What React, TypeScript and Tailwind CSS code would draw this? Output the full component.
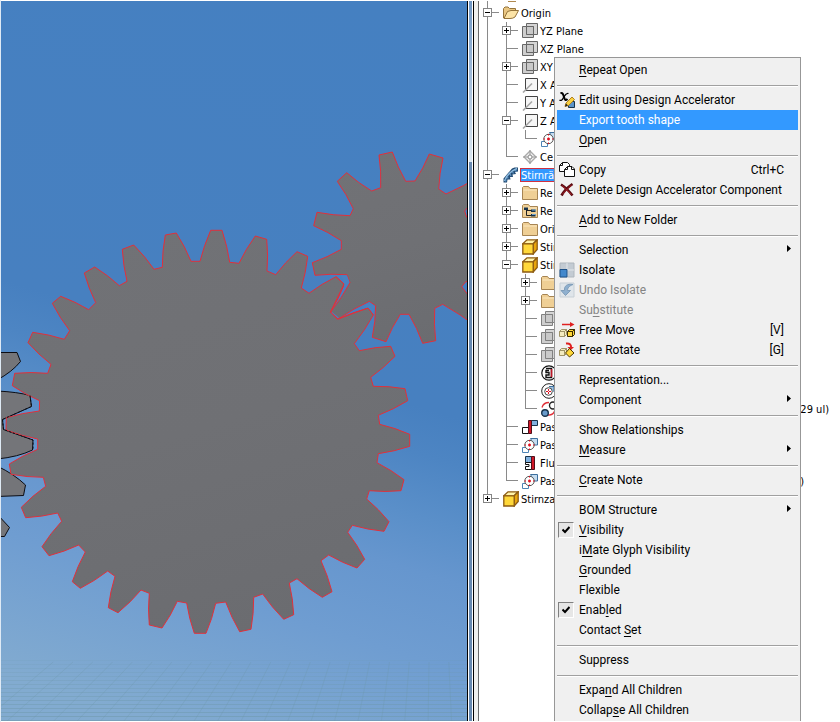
import React from "react";

type Pt = [number, number];

/* ---------- gear outlines: alternating root and tip edges, clockwise ---------- */

const BIG_GEAR: Pt[] = [
  [39.3, 411], [39.6, 400.7], [12.3, 385.7], [14.7, 373.3], [47.7, 373.3], [51, 364.3], [28, 342.7], [32.7, 332.3],
  [64.3, 339.3], [69.7, 330.7], [52.3, 303.3], [60.7, 296.3], [88.7, 309.7], [95.7, 302.7], [84.3, 273], [94.7, 267],
  [119.3, 285.7], [127, 281.3], [122.3, 249.3], [133.7, 245], [154, 269.3], [162.3, 267.3], [165.3, 235], [176.3, 233],
  [191, 261.3], [200, 261.3], [210.7, 230.3], [222, 230.3], [229.7, 262.3], [239, 263.3], [255.3, 236], [266.7, 239.3],
  [267, 271], [275.7, 274.7], [297, 251.7], [307.7, 256.3], [301.3, 288], [309, 293.3], [336, 276.7], [344.3, 284.3],
  [330.3, 312.3], [337.7, 319.3], [368.3, 308], [373.3, 315], [354.3, 343.7], [359.3, 350.7], [390.7, 346.3], [395, 356.3],
  [370.7, 377.3], [373.3, 386.3], [405, 388.7], [407.7, 400.7], [378.3, 415.3], [379.7, 424.3], [409.7, 434.3], [409.7, 446.3],
  [378.3, 453.7], [377, 462.7], [404, 479.7], [401, 490.7], [369.3, 490.7], [366.7, 499], [389, 521.7], [384, 531.3],
  [352.3, 525.3], [347.7, 532.3], [364.7, 559.3], [357, 568], [328.7, 555], [321, 560.7], [332, 591.7], [322.3, 597.3],
  [297, 578.7], [289.3, 583], [293.7, 614.7], [283.7, 619.3], [262.7, 594], [253.7, 597.3], [251, 629.3], [239.7, 631.7],
  [225.7, 602], [215.7, 603.3], [206, 633.3], [194.3, 633.3], [186.7, 603], [177.3, 601.3], [162, 628], [149.3, 625],
  [149.3, 593.3], [141, 590], [118, 612.7], [108.3, 607.7], [115, 576.3], [107.7, 571], [80.3, 588.3], [72.3, 581.7],
  [85.3, 552], [78.7, 545], [49, 555.7], [42, 546.7], [61.7, 521.3], [57.7, 513], [25.7, 517.7], [21.3, 507.3],
  [45.7, 486.3], [43.3, 477.3], [11, 474.3], [9.3, 464], [37.7, 449.3], [37.7, 439], [6, 430], [6.3, 417.7],
];

const PINION: Pt[] = [
  [347, 274.7], [350, 282.7], [330.7, 312], [339.3, 318.3], [369.3, 301.3], [375.7, 305.7], [372.3, 337.3], [386, 341.7],
  [400.3, 314.3], [409, 314.3], [422.7, 343.3], [435.7, 340.7], [434.7, 308.3], [442.7, 304.3], [477, 327], [487, 317],
  [461.7, 286.7], [465.7, 281.7], [498, 282], [500, 270], [473, 255], [473, 246], [503, 237], [502, 225],
  [466.7, 217.3], [464.7, 211], [488, 185], [480, 176], [446, 194], [438.7, 189], [443, 158], [429.3, 154],
  [415, 181], [405.7, 181.3], [392.3, 152], [379, 155], [380.7, 187.7], [371.7, 191], [346.7, 172.7], [337.3, 181.3],
  [353.3, 208.7], [350, 215.7], [317, 212.3], [313.7, 225.7], [341.3, 240.7], [341.3, 249.3], [312.3, 262.7], [315, 275.3],
];

/* Joins the points; every flank between root and tip bulges out a little,
   always to the left of the clockwise direction of travel. */
function gearPath(points: Pt[], bulge: number): string {
  let d = `M${points[0][0]} ${points[0][1]}`;
  for (let i = 1; i <= points.length; i++) {
    const a = points[i - 1];
    const b = points[i % points.length];
    if (i % 2 === 1) {
      d += `L${b[0]} ${b[1]}`;
      continue;
    }
    const dx = b[0] - a[0];
    const dy = b[1] - a[1];
    const len = Math.hypot(dx, dy) || 1;
    const mx = (a[0] + b[0]) / 2 + (bulge * dy) / len;
    const my = (a[1] + b[1]) / 2 - (bulge * dx) / len;
    d += `Q${mx} ${my} ${b[0]} ${b[1]}`;
  }
  return d + "Z";
}

function Viewport() {
  const rows = Array.from({ length: 16 }, (_, i) => 660 + i * 4);
  const cols = Array.from({ length: 22 }, (_, i) => i);
  return (
    <svg className="block h-full w-full" viewBox="0 0 466 720" preserveAspectRatio="xMinYMin slice" role="img" aria-label="Gear assembly">
      <defs>
        <linearGradient id="sky" gradientUnits="userSpaceOnUse" x1="380" y1="0" x2="160" y2="722">
          <stop offset="0" stopColor="#4580c1" />
          <stop offset="0.5" stopColor="#4780c0" />
          <stop offset="0.56" stopColor="#4d85c3" />
          <stop offset="0.64" stopColor="#5a8fc9" />
          <stop offset="0.71" stopColor="#6696ce" />
          <stop offset="0.82" stopColor="#6f9dd1" />
          <stop offset="1" stopColor="#82abd0" />
        </linearGradient>
        <linearGradient id="steel" x1="0.3" y1="0" x2="0.6" y2="1">
          <stop offset="0" stopColor="#717276" />
          <stop offset="0.5" stopColor="#6f7074" />
          <stop offset="1" stopColor="#6b6c70" />
        </linearGradient>
      </defs>
      <g transform="translate(-1 -1)">
        <rect x="0" y="0" width="1600" height="1600" fill="url(#sky)" />
        <g stroke="#6c97a6" strokeWidth="1">
          {rows.map((y, i) => (
            <line key={y} x1="0" x2="468" y1={y + 0.5} y2={y + 0.5} opacity={0.1 + i * 0.025} />
          ))}
          {cols.map((c) => (
            <line key={c} x1={c * 23 - 10 + (c * 23 - 380) * 0.02} y1="722" x2={380 + (c * 23 - 380) * 0.86} y2="662" opacity="0.25" />
          ))}
        </g>
        <g fill="#747579" stroke="#0c0c12" strokeWidth="1">
          <path d="M-3 352.5H17L20.5 361.5Q12 372 -3 380Z" />
          <path d="M-3 391Q18 392 30 395.5L31.5 406.5L2.5 419.5L3.5 429.5L33 440L32.500 450Q18 457 -3 459Z" />
          <path d="M-3 466Q14 474 25.500 485L23.500 495.500L-3 496.500Z" />
          <path d="M-3 514L9.500 527.500L4.500 536.500H-3Z" />
        </g>
        <g fill="url(#steel)" stroke="#e0303c" strokeWidth="1">
          <path d={gearPath(BIG_GEAR, 1.5)} />
          <path d={gearPath(PINION, 1.5)} />
        </g>
        {/* slivers of sky left open where the teeth mesh */}
        <g fill="#4a82c1">
          <path d="M341 275L347 275.500L349.500 282L344.500 287L343.500 281Z" />
          <path d="M361 307.500L369.500 302.500L374.500 306L373 313L368 308Z" />
          <path d="M332 312L339 317.500L337.500 318.500L331 313Z" />
        </g>
        <path d="M2.500 419.500L3.500 429.500L33 440V450M30 395.500L31.500 406.500L2.500 419.500" fill="none" stroke="#0c0c12" strokeDasharray="2 2" />
        <path d="M336 276.700L344 284L330.500 312L338 319L368 308L373.300 315" fill="none" stroke="#e0303c" />
      </g>
    </svg>
  );
}

/* ---------- browser tree ---------- */

type Kind =
  | "openFolder" | "folder" | "repFolder" | "plane" | "planeDim" | "axis" | "mate" | "mateRing" | "point"
  | "gear" | "part" | "iMate" | "link" | "flush" | "align";

function MateShape() {
  return (
    <>
      <path d="M8.500 1.500H15.500V8H12Z" fill="#c4dcf0" stroke="#3c6f9d" />
      <path d="M4 10.500H.5V15.500H6.500V13" fill="#fff" stroke="#4d84b5" />
      <circle cx="7.500" cy="8" r="4.700" fill="#fff" stroke="#555" />
      <path d="M6 8H9M7.500 6.500V9.500" stroke="#e01020" strokeWidth="1.400" />
      <path d="M7.500 3V4.500M7.500 11.500V13M2.500 8H4M11 8H12.500" stroke="#e01020" />
    </>
  );
}

function TreeIcon({ kind }: { kind: Kind }) {
  let art: React.ReactNode = null;
  switch (kind) {
    case "openFolder":
      art = (
        <>
          <path d="M.5 13V3.500L2 2H5L6.500 3.500H12.500V6" fill="#e9c682" stroke="#94733a" />
          <path d="M1 13.500L4.500 6.500L8 5.500H15.500L12 12Q10 13.500 7 13.500Z" fill="#fbe3a6" stroke="#94733a" />
        </>
      );
      break;
    case "folder":
    case "repFolder":
      art = (
        <>
          <path d="M.5 14.500V2.500L1.500 1.500H6.500L8 3.500H15.500V14.500Z" fill="#efcf95" stroke="#a68453" />
          <path d="M1.500 5H15" stroke="#fbe7bf" />
          {kind === "repFolder" && (
            <>
              <path d="M4.500 6V12.500H9M4.500 7.500H9" fill="none" stroke="#222" />
              <path d="M2 4.500H6V7H2ZM9 6.500H13.500V9H9ZM9 11H13.500V13.500H9Z" fill="#17324a" />
              <path d="M10 7H14M10 11.500H14" stroke="#6fa3d0" />
            </>
          )}
        </>
      );
      break;
    case "plane":
    case "planeDim": {
      const s = kind === "plane" ? "#666" : "#808080";
      art = (
        <>
          <path d="M4.500 .5H15.500V11.500H4.500Z" fill="#d5d5d5" stroke={s} />
          <path d="M.5 3.500H11.500V14.500H.5Z" fill="#bdbdbd" fillOpacity=".75" stroke={s} />
          <path d="M4.500 3.500H11.500V11.500H4.500Z" fill="#c9c9c9" stroke={s} />
        </>
      );
      break;
    }
    case "axis":
      art = (
        <>
          <path d="M3.500 1.500H15.500V13.500H3.500Z" fill="#f6f6f6" stroke="#444" />
          <path d="M1 15.500L10 6.500" stroke="#a5a5a5" strokeWidth="1.600" />
        </>
      );
      break;
    case "mate":
      art = <MateShape />;
      break;
    case "mateRing":
      art = (
        <>
          <circle cx="8" cy="8" r="7.300" fill="#fff" stroke="#222" />
          <path d="M8 3.500H13V9" fill="#9fc3e4" stroke="#3c6f9d" />
          <circle cx="7.500" cy="8.500" r="3.800" fill="#fff" stroke="#444" />
          <path d="M7.500 6V11M5 8.500H10" stroke="#e01020" strokeDasharray="2 1" />
        </>
      );
      break;
    case "point":
      art = (
        <>
          <path d="M8 2L14 8L8 14L2 8Z" fill="#eee" stroke="#aaa" strokeWidth="1.300" />
          <path d="M8 1V6M8 10V15M1 8H6M10 8H15" stroke="#999" />
          <circle cx="8" cy="8" r="2" fill="#fff" stroke="#888" />
        </>
      );
      break;
    case "gear":
      art = (
        <>
          <path d="M.5 15.500V11.500L9 1.500L11.500 .5H15V4.500L12 5L13 7L9.500 7.500L10 10L7 10L7.500 12.500L4.500 12.500L4 15.500Z" fill="#234c74" />
          <path d="M1.500 14C3.500 8.500 7.500 4 14 1.500" fill="none" stroke="#8fbce0" strokeWidth="1.400" />
          <path d="M2.500 14.500L3 12.500M5 11.500L4.500 9.500M8 9L7 7M10.500 6.500L9.500 5M13.500 4.500L12 3" stroke="#5f95c6" strokeWidth="1.200" />
        </>
      );
      break;
    case "part":
      art = (
        <>
          <path d="M.8 4.800L5 .8H15.200L11.200 4.800Z" fill="#fff3a8" stroke="#8d5b12" strokeWidth="1.300" />
          <path d="M11.200 4.800L15.200 .8V10.500L11.200 15Z" fill="#e8a50c" stroke="#8d5b12" strokeWidth="1.300" />
          <path d="M.8 4.800H11.200V15H.8Z" fill="#ffd83a" stroke="#8d5b12" strokeWidth="1.300" />
        </>
      );
      break;
    case "iMate":
      art = (
        <>
          <circle cx="8" cy="8" r="7.200" fill="#fff" stroke="#111" strokeWidth="1.200" />
          <path d="M5 3.500H10.500V12.500H5V10H8V7.500H5V5.500H8" fill="none" stroke="#111" strokeWidth="1.400" />
          <path d="M10.500 4V12" stroke="#c01828" strokeWidth="1.600" />
        </>
      );
      break;
    case "link":
      art = (
        <>
          <path d="M1 6.500C2 3 5 1.500 8 1.500M6 14C10 14.500 13 12.500 14 9" fill="none" stroke="#e03038" strokeWidth="1.300" />
          <circle cx="4" cy="12" r="3.300" fill="#6a9ccc" stroke="#17324a" strokeWidth="1.400" />
          <circle cx="12" cy="4.500" r="3.500" fill="#fff" stroke="#222" strokeWidth="1.400" />
        </>
      );
      break;
    case "flush":
      art = (
        <>
          <path d="M9.500 1.500H15.500V6.500H9.500Z" fill="#7fb0de" stroke="#17324a" />
          <path d="M.5 8.500H6.500V14.500H.5Z" fill="#fff" stroke="#111" />
          <path d="M6.500 1.500H9.500V14.500H6.500Z" fill="#d01828" stroke="#50101a" />
        </>
      );
      break;
    case "align":
      art = (
        <>
          <path d="M3.500 1.500H9.500V7.500H3.500Z" fill="#7fb0de" stroke="#17324a" />
          <path d="M3.500 7.500H9.500V14.500H3.500V11.500H7V9.500H3.500Z" fill="#fff" stroke="#111" />
          <path d="M9.500 1.500H12.500V14.500H9.500Z" fill="#d01828" stroke="#50101a" />
        </>
      );
      break;
  }
  return (
    <svg className="ml-[5px] size-4 shrink-0" viewBox="0 0 16 16" aria-hidden="true">
      {art}
    </svg>
  );
}

/* One 19px indent cell: v = line through, t = tee, l = last,
   p / m = plus or minus tee, e = plus on the last branch. */
function Branch({ type }: { type: string }) {
  const through = type === "v" || type === "t" || type === "p" || type === "m";
  return (
    <svg className="h-[18px] w-[19px] shrink-0 overflow-visible" viewBox="0 0 19 18" shapeRendering="crispEdges" aria-hidden="true">
      <path d={through ? "M8.500 0V18" : "M8.500 0V9"} stroke="#8a8a8a" />
      {type !== "v" && <path d="M8.500 8.500H20" stroke="#8a8a8a" />}
      {(type === "p" || type === "m" || type === "e") && (
        <>
          <rect x="4.500" y="4.500" width="8" height="8" fill="#fff" stroke="#858585" />
          <path d={type === "m" ? "M6 8.500H11" : "M6 8.500H11M8.500 6V11"} stroke="#000" />
        </>
      )}
    </svg>
  );
}

interface Node {
  cells: string;
  icon: Kind;
  text: string;
  tail?: string;
  tailClass?: string;
  selected?: boolean;
}

const NODES: Node[] = [
  { cells: "m", icon: "openFolder", text: "Origin" },
  { cells: "vp", icon: "plane", text: "YZ Plane" },
  { cells: "vt", icon: "plane", text: "XZ Plane" },
  { cells: "vp", icon: "plane", text: "XY" },
  { cells: "vt", icon: "axis", text: "X A" },
  { cells: "vt", icon: "axis", text: "Y A" },
  { cells: "vm", icon: "axis", text: "Z A" },
  { cells: "vvl", icon: "mate", text: "" },
  { cells: "vl", icon: "point", text: "Ce" },
  { cells: "m", icon: "gear", text: "Stirnrä", selected: true },
  { cells: "vp", icon: "folder", text: "Re" },
  { cells: "vp", icon: "repFolder", text: "Re" },
  { cells: "vp", icon: "folder", text: "Ori" },
  { cells: "vp", icon: "part", text: "Stir" },
  { cells: "vm", icon: "part", text: "Stir" },
  { cells: "vvp", icon: "folder", text: "" },
  { cells: "vvp", icon: "folder", text: "" },
  { cells: "vvt", icon: "planeDim", text: "" },
  { cells: "vvt", icon: "planeDim", text: "" },
  { cells: "vvt", icon: "planeDim", text: "" },
  { cells: "vvt", icon: "iMate", text: "" },
  { cells: "vvt", icon: "mateRing", text: "" },
  { cells: "vvl", icon: "link", text: "", tail: "429 ul)", tailClass: "pr-[11px]" },
  { cells: "vt", icon: "flush", text: "Pas" },
  { cells: "vt", icon: "mate", text: "Pas" },
  { cells: "vt", icon: "align", text: "Flu" },
  { cells: "vl", icon: "mate", text: "Pas", tail: ")", tailClass: "pr-9" },
  { cells: "e", icon: "part", text: "Stirnza" },
];

function Tree() {
  return (
    <div className="font-['DejaVu_Sans_Condensed','Noto_Sans',sans-serif] text-[11px] leading-[18px] text-black">
      <svg className="block h-[3px] w-10" viewBox="0 0 40 3" shapeRendering="crispEdges" aria-hidden="true">
        <path d="M8.500 0V3" stroke="#8a8a8a" />
        <path d="M29 .5H37" stroke="#b08a50" />
      </svg>
      <ul>
        {NODES.map((n, i) => (
          <li key={i} className="flex h-[18px] items-center">
            {n.cells.split("").map((c, j) => (
              <Branch key={j} type={c} />
            ))}
            <TreeIcon kind={n.icon} />
            {n.selected ? (
              <span className="ml-px h-[14px] w-16 border border-[#d03040] bg-[#3399ff] leading-[13px] text-white">{n.text}</span>
            ) : (
              <span className="ml-[2px] pt-px whitespace-nowrap">{n.text}</span>
            )}
            {n.tail && <span className={`ml-auto pt-px ${n.tailClass}`}>{n.tail}</span>}
          </li>
        ))}
      </ul>
    </div>
  );
}

/* ---------- context menu ---------- */

function Cube({ x, y, fill }: { x: number; y: number; fill: string }) {
  return (
    <g transform={`translate(${x} ${y})`} stroke={fill === "#ffd83a" ? "#3c2c00" : "#a09468"} fill={fill}>
      <path d="M.5 2.500L2.500 .5H7.500L5.500 2.500ZM5.500 2.500L7.500 .5V5.500L5.500 7.500ZM.5 2.500H5.500V7.500H.5Z" />
    </g>
  );
}

const MENU_ART: Record<string, React.ReactNode> = {
  edit: (
    <>
      <path d="M9.500 9.500H15.500V15.500H9.500Z" fill="#5b93c9" stroke="#17324a" />
      <path d="M6 14.500L7 11L13 5L15.500 7.500L9.500 13.500Z" fill="#f8d040" stroke="#b08020" />
      <path d="M6 14.500L7 11.500L9 13.500Z" fill="#222" />
      <path d="M1.500 1.500C3.500 0 4.200 2.500 5 5C5.800 8 6.500 9 8.500 7" fill="none" stroke="#000" strokeWidth="2" />
      <path d="M9.500 1.500C7 .5 5.500 4 4.500 5.500C3.200 8.500 2 9 .5 8" fill="none" stroke="#000" strokeWidth="1.300" />
    </>
  ),
  copy: (
    <>
      <path d="M3.500 .5H8.500L10.500 2.500V9.500H.5V3.500Z" fill="#fff" stroke="#111" />
      <path d="M3.500 .5V3.500H.5" fill="none" stroke="#111" />
      <path d="M8.500 4.500H13L15.500 7V14.500H5.500V7.500Z" fill="#fff" stroke="#111" />
      <path d="M8.500 4.500V7.500H5.500M12.500 4.500V7.500H15.500" fill="none" stroke="#111" />
    </>
  ),
  remove: (
    <>
      <path d="M2 2.500C6 5 10 9 13.500 13.500M13.500 2C9 5 5 9 2.500 13.500" fill="none" stroke="#5c0c12" strokeWidth="2.600" />
      <path d="M3 3.500L12.500 12.500M12.500 3L3.500 12" stroke="#a82028" strokeWidth="1" />
    </>
  ),
  isolate: (
    <>
      <path d="M1 1H15V15H1Z" fill="#c3cbd3" stroke="#aeb6bd" />
      <path d="M8 1V15M1 8H15" stroke="#e2e6ea" />
      <path d="M1 7.500H8V15H1Z" fill="#4288cc" stroke="#1e5288" />
    </>
  ),
  undo: (
    <>
      <path d="M1 1H15V15H1Z" fill="#dfe5ea" stroke="#c6cfd6" />
      <path d="M14 2.500C8 1.500 5 4 5.500 8.500H2L6.500 13.500L11.500 8.500H8.500C8.500 6 10 4 14 2.500Z" fill="#8fb0cf" stroke="#7f9db9" />
    </>
  ),
  move: (
    <>
      <path d="M3 2.500H12" stroke="#e02020" strokeWidth="1.500" />
      <path d="M11 0L15.500 2.500L11 5Z" fill="#e02020" />
      <Cube x={0} y={7} fill="#f3ebc0" />
      <Cube x={8} y={7} fill="#ffd83a" />
    </>
  ),
  rotate: (
    <>
      <path d="M7 1.500C11 1 12.500 3 12 6" fill="none" stroke="#e02020" strokeWidth="2" />
      <path d="M8.500 5H15L11.500 8.500Z" fill="#e02020" />
      <Cube x={0} y={6} fill="#f3ebc0" />
      <path d="M10.500 6.500L15 11L10.500 15L6.500 11Z" fill="#ffd83a" stroke="#4a3600" />
    </>
  ),
};

interface Entry {
  label: string;
  icon?: string;
  hint?: string;
  sub?: boolean;
  disabled?: boolean;
  active?: boolean;
  checked?: boolean;
}

/* Groups are parted by a rule; an underscore marks the access key. */
const GROUPS: Entry[][] = [
  [{ label: "_Repeat Open" }],
  [{ label: "Edit using Design Accelerator", icon: "edit" }, { label: "Export tooth shape", active: true }, { label: "_Open" }],
  [{ label: "Copy", icon: "copy", hint: "Ctrl+C" }, { label: "Delete Design Accelerator Component", icon: "remove" }],
  [{ label: "_Add to New Folder" }],
  [
    { label: "Selection", sub: true },
    { label: "Isolate", icon: "isolate" },
    { label: "Undo Isolate", icon: "undo", disabled: true },
    { label: "Su_bstitute", disabled: true },
    { label: "Free Move", icon: "move", hint: "[V]" },
    { label: "Free Rotate", icon: "rotate", hint: "[G]" },
  ],
  [{ label: "Representation..." }, { label: "Component", sub: true }],
  [{ label: "Show Relationships" }, { label: "_Measure", sub: true }],
  [{ label: "_Create Note" }],
  [
    { label: "BOM Structure", sub: true },
    { label: "_Visibility", checked: true },
    { label: "i_Mate Glyph Visibility" },
    { label: "_Grounded" },
    { label: "Flexible" },
    { label: "Enab_led", checked: true },
    { label: "Contact _Set" },
  ],
  [{ label: "Suppress" }],
  [{ label: "Expa_nd All Children" }, { label: "Collap_se All Children" }],
];

function Label({ text }: { text: string }) {
  const at = text.indexOf("_");
  if (at < 0) return <span>{text}</span>;
  return (
    <span>
      {text.slice(0, at)}
      <span className="underline underline-offset-2">{text[at + 1]}</span>
      {text.slice(at + 2)}
    </span>
  );
}

function MenuRow({ e }: { e: Entry }) {
  if (e.checked) {
    return (
      <label className="flex h-5 items-center">
        <span className="relative ml-px flex size-4 shrink-0">
          <input
            type="checkbox"
            defaultChecked
            className="size-4 appearance-none border border-t-[#808080] border-r-white border-b-white border-l-[#808080] bg-[#e6e6e6]"
          />
          <svg className="pointer-events-none absolute top-1 left-1 size-2" viewBox="0 0 8 8" aria-hidden="true">
            <path d="M.5 3.500L3 6L7.500 1" fill="none" stroke="#000" strokeWidth="2" />
          </svg>
        </span>
        <span className="ml-[5px]">
          <Label text={e.label} />
        </span>
      </label>
    );
  }
  const tone = e.active ? "bg-[#3399ff] text-white" : e.disabled ? "text-[#838383]" : "";
  return (
    <button type="button" disabled={e.disabled} className={`flex h-5 w-full items-center text-left whitespace-nowrap ${tone}`}>
      <span className="mr-1 ml-[2px] flex size-4 shrink-0">
        {e.icon && (
          <svg className="size-4" viewBox="0 0 16 16" aria-hidden="true">
            {MENU_ART[e.icon]}
          </svg>
        )}
      </span>
      <Label text={e.label} />
      {e.hint && <span className="mr-[14px] ml-auto">{e.hint}</span>}
      {e.sub && (
        <svg className="mr-[7px] mb-[3px] ml-auto h-[7px] w-1" viewBox="0 0 4 7" aria-hidden="true">
          <path d="M0 0L4 3.500L0 7Z" fill="#000" />
        </svg>
      )}
    </button>
  );
}

function ContextMenu() {
  return (
    <div className="absolute top-[57px] bottom-px left-[75px] w-[247px] overflow-hidden border border-b-0 border-[#979797] bg-[#f0f0f0] p-[2px] font-['Roboto','Noto_Sans',sans-serif] text-[12px] leading-5 text-black">
      {GROUPS.map((group, i) => (
        <React.Fragment key={i}>
          {i > 0 && (
            <div className="pt-[5px] pb-[3px]">
              <hr className="h-[2px] border-t border-b border-t-[#a0a0a0] border-b-white" />
            </div>
          )}
          {group.map((e) => (
            <MenuRow key={e.label} e={e} />
          ))}
        </React.Fragment>
      ))}
    </div>
  );
}

export default function App() {
  return (
    <div className="flex h-screen overflow-hidden bg-white">
      <main className="flex min-w-0 flex-1 border-l border-[#dfeaf5] pt-px pb-px">
        <div className="min-w-0 flex-1 overflow-hidden">
          <Viewport />
        </div>
        <div className="w-px bg-black" />
        <div className="flex w-[5px] flex-col border-l border-white bg-white pr-px">
          <div className="h-[161px] bg-linear-to-b from-[#6f97c4] to-[#dbe6ef]" />
          <div className="flex-1 bg-[#6789b0]" />
        </div>
        <div className="w-px bg-black" />
        <div className="w-1 bg-[#f0f0ee]" />
        <div className="w-px bg-[#6a6a6a]" />
      </main>
      <aside className="relative w-[361px] shrink-0 pt-px">
        <Tree />
        <ContextMenu />
      </aside>
    </div>
  );
}
